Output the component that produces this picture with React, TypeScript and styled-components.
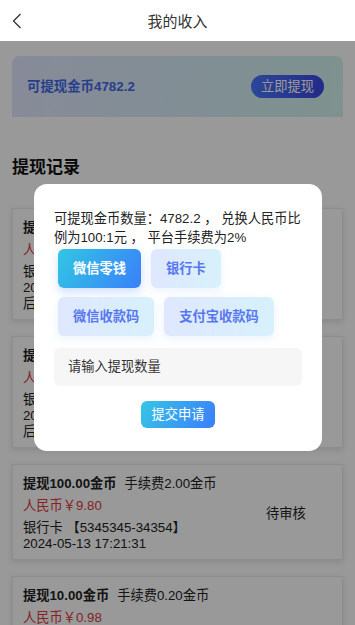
import React from "react";
import styled, { createGlobalStyle } from "styled-components";

const Global = createGlobalStyle`
  html, body { margin: 0; padding: 0; overflow: hidden; background: #fff; }
  body { font-family: "Liberation Sans", "Noto Sans CJK SC", sans-serif; color: #333; }
  * { box-sizing: border-box; }
`;

const Header = styled.div`
  height: 41px;
  display: flex;
  align-items: center;
  justify-content: center;
  position: relative;
  background: #fff;
  font-size: 15px;
  color: #333;
`;

const Back = styled.div`
  position: absolute;
  left: 12px;
  top: 13px;
  width: 10px;
  height: 16px;
  display: flex;
`;

const Page = styled.div`
  padding: 15px 12px 0;
`;

const Banner = styled.div`
  height: 61px;
  border-radius: 7px 7px 0 0;
  background: linear-gradient(100deg, #e2e7ff 0%, #d6eef6 60%, #d2f3ee 100%);
  display: flex;
  align-items: center;
  justify-content: space-between;
  padding: 0 19px 0 15px;
`;

const BannerText = styled.div`
  font-size: 13.4px;
  font-weight: bold;
  color: #416ae8;
  margin-top: -3px;
`;

const BannerButton = styled.div`
  height: 23px;
  padding: 0 10px;
  border-radius: 12px;
  background: linear-gradient(90deg, #4a76ff, #3a48e2);
  color: #fff;
  font-size: 13.25px;
  line-height: 23px;
`;

const SectionTitle = styled.div`
  margin-top: 39px;
  font-size: 17px;
  line-height: 24px;
  font-weight: bold;
  color: #111;
`;

const List = styled.div`
  margin-top: 28px;
  display: flex;
  flex-direction: column;
  gap: 16px;
`;

const Card = styled.div`
  border: 1px solid #ececec;
  box-shadow: 0 2px 6px rgba(0, 0, 0, 0.12);
  background: #fff;
  padding: 8px 10px 7px;
  display: flex;
  align-items: center;
`;

const CardBody = styled.div`
  flex: 1;
  font-size: 13.25px;
  color: #222;
`;

const TitleLine = styled.div`
  line-height: 22px;
  white-space: nowrap;
`;

const Strong = styled.span`
  font-weight: bold;
  margin-right: 8px;
`;

const Money = styled.div`
  line-height: 22px;
  color: #e0393c;
  margin-bottom: 3px;
`;

const Info = styled.div`
  line-height: 16px;
  white-space: nowrap;
`;

const Status = styled.div`
  width: 80px;
  margin-right: 6px;
  text-align: center;
  font-size: 13.25px;
  color: #222;
`;

const Mask = styled.div`
  position: fixed;
  left: 0;
  right: 0;
  top: 41px;
  bottom: 0;
  background: rgba(0, 0, 0, 0.4);
`;

const Modal = styled.div`
  position: fixed;
  left: 34px;
  top: 184px;
  width: 288px;
  height: 267px;
  background: #fff;
  border-radius: 13px;
  padding: 24.5px 20px 0;
`;

const ModalText = styled.div`
  font-size: 13.25px;
  line-height: 19px;
  color: #222;
`;

const Methods = styled.div`
  margin-top: 2.5px;
  padding-left: 4px;
  display: flex;
  flex-wrap: wrap;
  gap: 9px 10px;
`;

const Method = styled.div<{ $active?: boolean }>`
  height: 39px;
  padding: 0 15px;
  border-radius: 6px;
  font-size: 13.25px;
  font-weight: bold;
  line-height: 39px;
  color: ${(p) => (p.$active ? "#fff" : "#5877ee")};
  background: ${(p) =>
    p.$active
      ? "linear-gradient(120deg, #31c6e4 0%, #3a80fa 100%)"
      : "linear-gradient(90deg, #dfe7ff 0%, #d7f1fb 100%)"};
  box-shadow: ${(p) =>
    p.$active
      ? "0 4px 10px rgba(58, 128, 250, 0.25)"
      : "0 3px 10px rgba(120, 180, 250, 0.15)"};
`;

const Input = styled.div`
  margin-top: 12px;
  height: 38px;
  border-radius: 6px;
  background: #f6f6f6;
  padding-left: 14px;
  font-size: 13.25px;
  line-height: 38px;
  color: #333;
`;

const SubmitRow = styled.div`
  display: flex;
  justify-content: center;
  margin-top: 15px;
`;

const Submit = styled.div`
  height: 27px;
  padding: 0 10px;
  border-radius: 6px;
  background: linear-gradient(120deg, #36c5e6 0%, #3b7efa 100%);
  color: #fff;
  font-size: 13.25px;
  line-height: 27px;
`;

type Rec = {
  amount: string;
  fee: string;
  rmb: string;
  bank: string;
  time: string;
  note?: string;
  status: string;
};

const records: Rec[] = [
  { amount: "提现100.00金币", fee: "手续费2.00金币", rmb: "人民币￥9.80", bank: "银行卡 【5345345-34354】", time: "2024-05-13 17:25:02", note: "后台备注：信息有误", status: "已驳回" },
  { amount: "提现100.00金币", fee: "手续费2.00金币", rmb: "人民币￥9.80", bank: "银行卡 【5345345-34354】", time: "2024-05-13 17:23:11", note: "后台备注：信息有误", status: "已驳回" },
  { amount: "提现100.00金币", fee: "手续费2.00金币", rmb: "人民币￥9.80", bank: "银行卡 【5345345-34354】", time: "2024-05-13 17:21:31", status: "待审核" },
  { amount: "提现10.00金币", fee: "手续费0.20金币", rmb: "人民币￥0.98", bank: "银行卡 【5345345-34354】", time: "2024-05-13 17:20:08", note: "后台备注：信息有误", status: "已驳回" },
];

export default function App() {
  return (
    <>
      <Global />
      <Header>
        <Back>
          <svg width="10" height="16" viewBox="0 0 10 16">
            <polyline points="8.5,1 1.5,8 8.5,15" fill="none" stroke="#333" strokeWidth="1.3" />
          </svg>
        </Back>
        我的收入
      </Header>
      <Page>
        <Banner>
          <BannerText>可提现金币4782.2</BannerText>
          <BannerButton>立即提现</BannerButton>
        </Banner>
        <SectionTitle>提现记录</SectionTitle>
        <List>
          {records.map((r, i) => (
            <Card key={i}>
              <CardBody>
                <TitleLine>
                  <Strong>{r.amount}</Strong>
                  {r.fee}
                </TitleLine>
                <Money>{r.rmb}</Money>
                <Info>{r.bank}</Info>
                <Info>{r.time}</Info>
                {r.note && <Info>{r.note}</Info>}
              </CardBody>
              <Status>{r.status}</Status>
            </Card>
          ))}
        </List>
      </Page>
      <Mask />
      <Modal>
        <ModalText>可提现金币数量：4782.2 ， 兑换人民币比例为100:1元 ， 平台手续费为2%</ModalText>
        <Methods>
          <Method $active>微信零钱</Method>
          <Method>银行卡</Method>
          <Method>微信收款码</Method>
          <Method>支付宝收款码</Method>
        </Methods>
        <Input>请输入提现数量</Input>
        <SubmitRow>
          <Submit>提交申请</Submit>
        </SubmitRow>
      </Modal>
    </>
  );
}
